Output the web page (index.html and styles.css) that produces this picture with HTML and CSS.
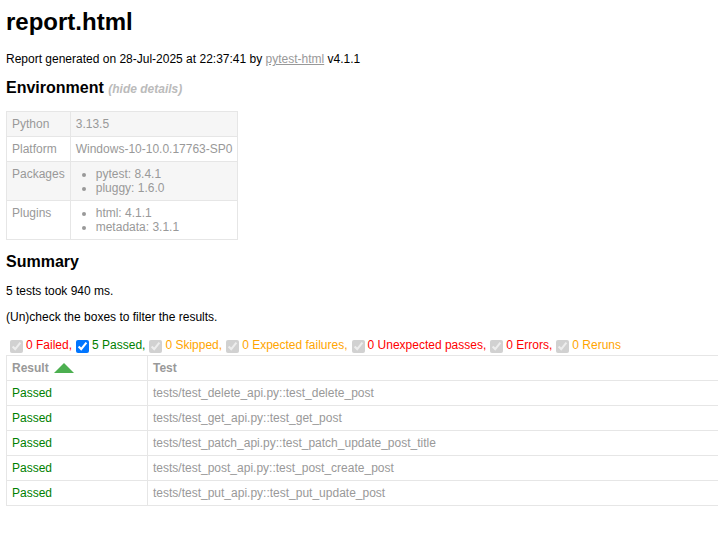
FILE: index.html
```html
<!DOCTYPE html>
<html>
<head>
<meta charset="utf-8">
<title>report.html</title>
<link rel="stylesheet" href="styles.css">
</head>
<body>
<h1 class="title">report.html</h1>
<p class="text">Report generated on 28-Jul-2025 at 22:37:41 by <a class="link" href="#">pytest-html</a> v4.1.1</p>
<h2 class="heading">Environment <span class="toggle">(hide details)</span></h2>
<table class="env">
  <tr class="env-row odd"><td class="env-key">Python</td><td class="env-val">3.13.5</td></tr>
  <tr class="env-row"><td class="env-key">Platform</td><td class="env-val">Windows-10-10.0.17763-SP0</td></tr>
  <tr class="env-row odd"><td class="env-key">Packages</td><td class="env-val"><ul class="env-list"><li>pytest: 8.4.1</li><li>pluggy: 1.6.0</li></ul></td></tr>
  <tr class="env-row"><td class="env-key">Plugins</td><td class="env-val"><ul class="env-list"><li>html: 4.1.1</li><li>metadata: 3.1.1</li></ul></td></tr>
</table>
<h2 class="heading">Summary</h2>
<p class="text">5 tests took 940 ms.</p>
<p class="text">(Un)check the boxes to filter the results.</p>
<div class="filters"><input class="filter" type="checkbox" checked disabled><span class="failed">0 Failed,</span><input class="filter" type="checkbox" checked><span class="passed">5 Passed,</span><input class="filter" type="checkbox" checked disabled><span class="skipped">0 Skipped,</span><input class="filter" type="checkbox" checked disabled><span class="xfailed">0 Expected failures,</span><input class="filter" type="checkbox" checked disabled><span class="xpassed">0 Unexpected passes,</span><input class="filter" type="checkbox" checked disabled><span class="error">0 Errors,</span><input class="filter" type="checkbox" checked disabled><span class="rerun">0 Reruns</span></div>
<table class="results">
  <colgroup><col class="col-result"><col class="col-test"></colgroup>
  <thead>
    <tr><th class="res-head sortable">Result</th><th class="res-head">Test</th></tr>
  </thead>
  <tbody>
    <tr><td class="res-cell passed">Passed</td><td class="res-cell">tests/test_delete_api.py::test_delete_post</td></tr>
    <tr><td class="res-cell passed">Passed</td><td class="res-cell">tests/test_get_api.py::test_get_post</td></tr>
    <tr><td class="res-cell passed">Passed</td><td class="res-cell">tests/test_patch_api.py::test_patch_update_post_title</td></tr>
    <tr><td class="res-cell passed">Passed</td><td class="res-cell">tests/test_post_api.py::test_post_create_post</td></tr>
    <tr><td class="res-cell passed">Passed</td><td class="res-cell">tests/test_put_api.py::test_put_update_post</td></tr>
  </tbody>
</table>
</body>
</html>
```

FILE: styles.css
```css
html {
  overflow: hidden;
  background: #fff;
}
body {
  margin: 8px 6px;
  font-family: "Liberation Sans", Arial, Helvetica, sans-serif;
  font-size: 12px;
  color: #999;
  min-width: 800px;
}
.title {
  font-size: 24px;
  font-weight: bold;
  color: #000;
  margin: 0 0 16px;
}
.text {
  color: #000;
  margin: 12px 0;
}
.link {
  color: #999;
}
.heading {
  font-size: 16px;
  font-weight: bold;
  color: #000;
  margin: 13.3px 0;
}
.toggle {
  font-size: 12px;
  font-style: italic;
  color: #bbb;
}
.env {
  border-collapse: collapse;
}
.env-row.odd {
  background: #f6f6f6;
}
.env-key, .env-val {
  padding: 5px;
  border: 1px solid #e6e6e6;
  vertical-align: top;
  text-align: left;
}
.env-list {
  margin: 0;
  padding: 0 20px;
}
.filters {
  color: #000;
  white-space: nowrap;
}
.filter {
  width: 13px;
  height: 13px;
  margin: 3px 3px 3px 4px;
  vertical-align: middle;
  position: relative;
  top: 1px;
}
.failed { color: red; }
.passed { color: green; }
.skipped { color: orange; }
.xfailed { color: orange; }
.xpassed { color: red; }
.error { color: red; }
.rerun { color: orange; }
.results {
  border-collapse: collapse;
  border: 1px solid #e6e6e6;
  width: 100%;
  table-layout: fixed;
  color: #999;
  font-size: 12px;
}
.col-result {
  width: 141px;
}
.res-head, .res-cell {
  padding: 5px;
  border: 1px solid #e6e6e6;
  text-align: left;
  white-space: nowrap;
}
.res-head {
  font-weight: bold;
}
.res-cell.passed {
  color: green;
}
.sortable::after {
  content: "";
  display: inline-block;
  margin-left: 5px;
  width: 0;
  height: 0;
  border-left: 10px solid transparent;
  border-right: 10px solid transparent;
  border-bottom: 10px solid #4caf50;
  vertical-align: -1px;
}
```
